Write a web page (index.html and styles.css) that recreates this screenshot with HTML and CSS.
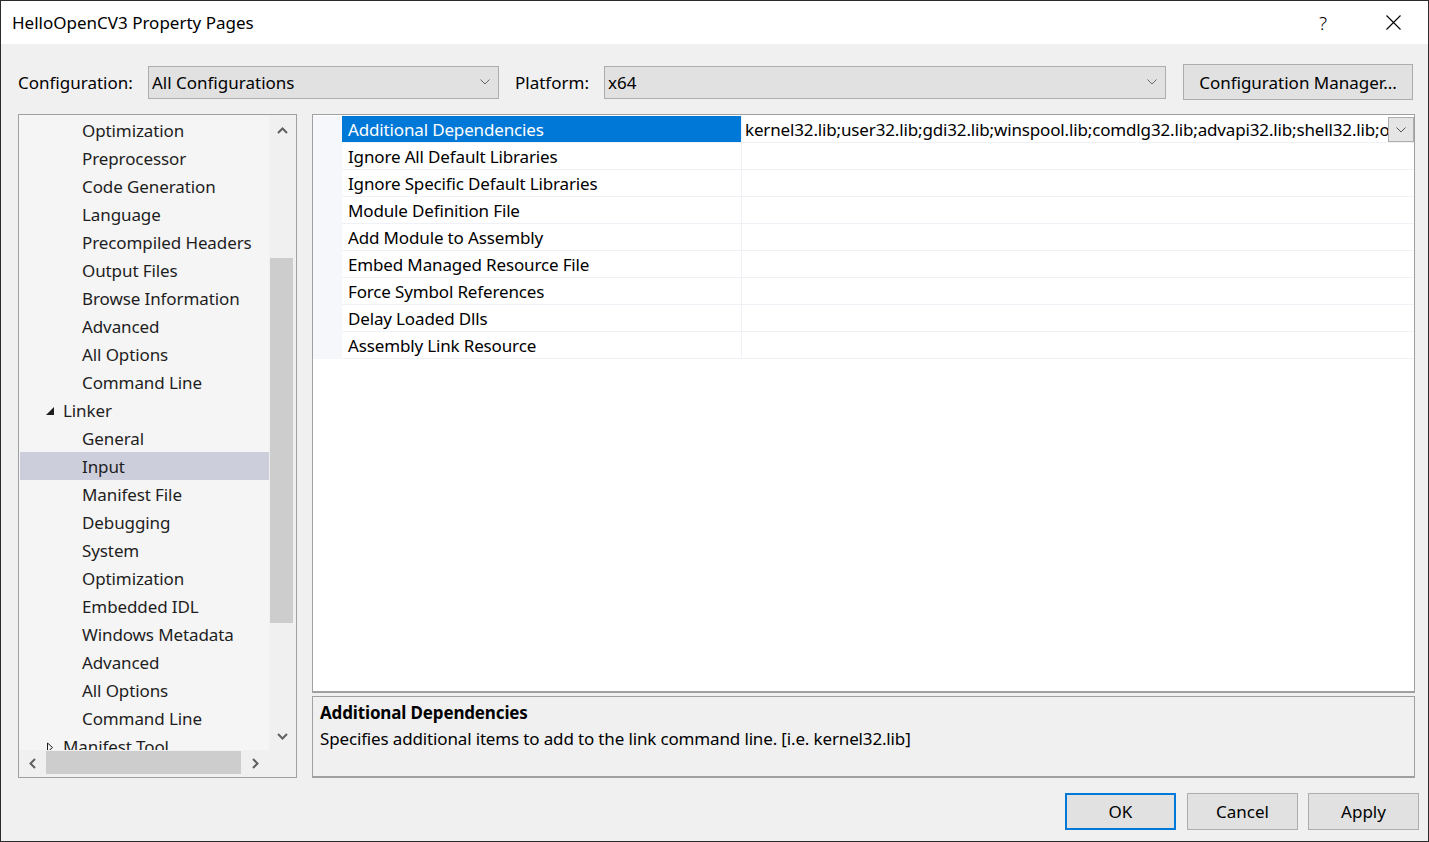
FILE: index.html
```html
<!DOCTYPE html>
<html lang="en">
<head>
	<meta charset="UTF-8" />
	<title>HelloOpenCV3 Property Pages</title>
	<link rel="stylesheet" href="styles.css">
</head>
<body>

<div class="window">

	<!-- title bar -->
	<div class="titlebar">
		<span class="title">HelloOpenCV3 Property Pages</span>
		<span class="caption-btn help">?</span>
		<span class="caption-btn">
			<svg width="15" height="15" viewBox="0 0 15 15"><path d="M0.5 0.5 L14.5 14.5 M14.5 0.5 L0.5 14.5" stroke="#000" stroke-width="1.1" fill="none"/></svg>
		</span>
	</div>

	<!-- configuration / platform -->
	<div class="config-row">
		<label class="config-label">Configuration:</label>
		<div class="combo combo-config">
			<span>All Configurations</span>
			<svg width="10" height="6" viewBox="0 0 10 6"><path d="M0.5 0.5 L5 5 L9.5 0.5" stroke="#666" fill="none"/></svg>
		</div>
		<label class="platform-label">Platform:</label>
		<div class="combo combo-platform">
			<span>x64</span>
			<svg width="10" height="6" viewBox="0 0 10 6"><path d="M0.5 0.5 L5 5 L9.5 0.5" stroke="#666" fill="none"/></svg>
		</div>
		<button class="btn btn-manager" type="button">Configuration Manager...</button>
	</div>

	<div class="main">

		<!-- page tree -->
		<div class="tree">
			<div class="tree-list">
				<div class="tree-item">Optimization</div>
				<div class="tree-item">Preprocessor</div>
				<div class="tree-item">Code Generation</div>
				<div class="tree-item">Language</div>
				<div class="tree-item">Precompiled Headers</div>
				<div class="tree-item">Output Files</div>
				<div class="tree-item">Browse Information</div>
				<div class="tree-item">Advanced</div>
				<div class="tree-item">All Options</div>
				<div class="tree-item">Command Line</div>
				<div class="tree-item tree-node">
					<svg class="expander" width="8" height="8" viewBox="0 0 8 8"><polygon points="8,0 8,8 0,8" fill="#1e1e1e"/></svg>
					<span>Linker</span>
				</div>
				<div class="tree-item">General</div>
				<div class="tree-item selected">Input</div>
				<div class="tree-item">Manifest File</div>
				<div class="tree-item">Debugging</div>
				<div class="tree-item">System</div>
				<div class="tree-item">Optimization</div>
				<div class="tree-item">Embedded IDL</div>
				<div class="tree-item">Windows Metadata</div>
				<div class="tree-item">Advanced</div>
				<div class="tree-item">All Options</div>
				<div class="tree-item">Command Line</div>
				<div class="tree-item tree-node">
					<svg class="expander" width="8" height="11" viewBox="0 0 8 11"><polygon points="1.5,1 6.5,5.5 1.5,10" fill="none" stroke="#1e1e1e"/></svg>
					<span>Manifest Tool</span>
				</div>
			</div>
			<div class="vscroll">
				<div class="sb-arrow sb-up">
					<svg width="11" height="7" viewBox="0 0 11 7"><path d="M1 6 L5.5 1.5 L10 6" stroke="#606060" stroke-width="2" fill="none"/></svg>
				</div>
				<div class="vthumb"></div>
				<div class="sb-fill"></div>
				<div class="sb-arrow sb-down">
					<svg width="11" height="7" viewBox="0 0 11 7"><path d="M1 1 L5.5 5.5 L10 1" stroke="#606060" stroke-width="2" fill="none"/></svg>
				</div>
			</div>
			<div class="hscroll">
				<div class="sb-arrow sb-left">
					<svg width="7" height="11" viewBox="0 0 7 11"><path d="M6 1 L1.5 5.5 L6 10" stroke="#606060" stroke-width="2" fill="none"/></svg>
				</div>
				<div class="hthumb"></div>
				<div class="sb-arrow sb-right">
					<svg width="7" height="11" viewBox="0 0 7 11"><path d="M1 1 L5.5 5.5 L1 10" stroke="#606060" stroke-width="2" fill="none"/></svg>
				</div>
			</div>
		</div>

		<div class="right-pane">

			<!-- property grid -->
			<div class="grid">
				<div class="prop-row">
					<div class="gutter"></div>
					<div class="prop-name active">Additional Dependencies</div>
					<div class="prop-value">
						<span class="value-text">kernel32.lib;user32.lib;gdi32.lib;winspool.lib;comdlg32.lib;advapi32.lib;shell32.lib;ole32.lib;oleaut32.lib;uuid.lib;odbc32.lib;odbccp32.lib;%(AdditionalDependencies)</span>
						<span class="dropdown">
							<svg width="10" height="6" viewBox="0 0 10 6"><path d="M0.5 0.5 L5 5 L9.5 0.5" stroke="#555" fill="none"/></svg>
						</span>
					</div>
				</div>
				<div class="prop-row"><div class="gutter"></div><div class="prop-name">Ignore All Default Libraries</div><div class="prop-value"></div></div>
				<div class="prop-row"><div class="gutter"></div><div class="prop-name">Ignore Specific Default Libraries</div><div class="prop-value"></div></div>
				<div class="prop-row"><div class="gutter"></div><div class="prop-name">Module Definition File</div><div class="prop-value"></div></div>
				<div class="prop-row"><div class="gutter"></div><div class="prop-name">Add Module to Assembly</div><div class="prop-value"></div></div>
				<div class="prop-row"><div class="gutter"></div><div class="prop-name">Embed Managed Resource File</div><div class="prop-value"></div></div>
				<div class="prop-row"><div class="gutter"></div><div class="prop-name">Force Symbol References</div><div class="prop-value"></div></div>
				<div class="prop-row"><div class="gutter"></div><div class="prop-name">Delay Loaded Dlls</div><div class="prop-value"></div></div>
				<div class="prop-row"><div class="gutter"></div><div class="prop-name">Assembly Link Resource</div><div class="prop-value"></div></div>
			</div>

			<!-- description of the selected property -->
			<div class="description">
				<div class="desc-title">Additional Dependencies</div>
				<div class="desc-text">Specifies additional items to add to the link command line. [i.e. kernel32.lib]</div>
			</div>
		</div>
	</div>

	<div class="footer">
		<button class="btn btn-ok" type="button">OK</button>
		<button class="btn" type="button">Cancel</button>
		<button class="btn" type="button">Apply</button>
	</div>
</div>

</body>
</html>
```

FILE: styles.css
```css
* {
	box-sizing: border-box;
}

body {
	margin: 0;
	font-family: "Noto Sans", "Open Sans", sans-serif;
	font-size: 17px;
	color: #1e1e1e;
	background-color: #1f1f1f;
}

.window {
	width: 1429px;
	height: 842px;
	border: 1px solid #2b2b2b;
	background-color: #f0f0f0;
	display: flex;
	flex-direction: column;
}

/* title bar */
.titlebar {
	height: 43px;
	flex: none;
	background-color: #fff;
	display: flex;
	align-items: center;
	color: #000;
}

.title {
	flex: 1;
	padding-left: 11px;
	font-size: 17px;
}

.caption-btn {
	width: 70px;
	height: 43px;
	display: flex;
	align-items: center;
	justify-content: center;
}

.help {
	font-size: 19px;
	font-weight: 300;
}

/* configuration row */
.config-row {
	display: flex;
	align-items: center;
	height: 36px;
	margin: 20px 0 0 17px;
	color: #000;
}

.config-label {
	width: 130px;
}

.platform-label {
	width: 89px;
	margin-left: 16px;
}

.combo {
	height: 33px;
	border: 1px solid #adadad;
	background-color: #e1e1e1;
	display: flex;
	align-items: center;
	justify-content: space-between;
	padding: 0 8px 0 3px;
}

.combo-config {
	width: 351px;
}

.combo-platform {
	width: 562px;
}

.btn {
	height: 36px;
	border: 1px solid #adadad;
	background-color: #e1e1e1;
	font-family: inherit;
	font-size: 17px;
	color: #000;
	padding: 0;
}

.btn-manager {
	width: 230px;
	margin-left: 17px;
}

/* tree + grid */
.main {
	display: flex;
	gap: 15px;
	height: 664px;
	margin: 14px 0 0 17px;
}

.tree {
	width: 279px;
	border: 1px solid #a0a0a0;
	background-color: #f5f5f5;
	display: grid;
	grid-template-columns: 250px 27px;
	grid-template-rows: 635px 27px;
}

.tree-list {
	overflow: hidden;
	padding-top: 1px;
	letter-spacing: -0.1px;
}

.tree-item {
	height: 28px;
	line-height: 26px;
	padding-top: 2px;
	padding-left: 63px;
	white-space: nowrap;
}

.tree-item.selected {
	background-color: #cccedb;
	margin-left: 1px;
	padding-left: 62px;
}

.tree-node {
	display: flex;
	align-items: center;
	padding-left: 27px;
}

.tree-node .expander {
	margin-right: 9px;
}

.vscroll {
	background-color: #f0f0f0;
	display: flex;
	flex-direction: column;
}

.sb-arrow {
	display: flex;
	align-items: center;
	justify-content: center;
	flex: none;
}

.sb-up {
	height: 30px;
}

.sb-down {
	height: 28px;
}

.vthumb {
	width: 23px;
	height: 365px;
	margin: 113px 0 0 1px;
	background-color: #cdcdcd;
}

.sb-fill {
	flex: 1;
}

.hscroll {
	grid-column: 1 / span 2;
	background-color: #f0f0f0;
	display: flex;
}

.sb-left {
	width: 27px;
}

.sb-right {
	width: 28px;
}

.hthumb {
	width: 195px;
	height: 23px;
	margin-top: 1px;
	background-color: #cdcdcd;
}

.right-pane {
	width: 1103px;
	display: flex;
	flex-direction: column;
	gap: 3px;
	letter-spacing: -0.15px;
}

.grid {
	height: 579px;
	border: 1px solid #a0a0a0;
	border-bottom-width: 2px;
	background-color: #fff;
	padding-top: 1px;
}

.prop-row {
	display: flex;
	height: 27px;
	color: #000;
}

.gutter {
	width: 29px;
	background-color: #f5f7fb;
}

.prop-name {
	width: 400px;
	padding-left: 6px;
	padding-top: 2px;
	line-height: 24px;
	border-right: 1px solid #eef1f6;
	border-bottom: 1px solid #eef1f6;
	white-space: nowrap;
}

.prop-name.active {
	background-color: #0078d7;
	color: #fff;
}

.prop-value {
	flex: 1;
	min-width: 0;
	display: flex;
	border-bottom: 1px solid #eef1f6;
}

.value-text {
	flex: 1;
	overflow: hidden;
	white-space: nowrap;
	padding-left: 3px;
	padding-top: 2px;
	line-height: 24px;
}

.dropdown {
	width: 26px;
	height: 25px;
	margin-top: 1px;
	border: 1px solid #adadad;
	background-color: #e5e5e5;
	display: flex;
	align-items: center;
	justify-content: center;
}

.description {
	height: 82px;
	border: 1px solid #a0a0a0;
	border-bottom-width: 2px;
	padding: 3px 7px;
	color: #000;
	line-height: 26px;
}

.desc-title {
	font-weight: bold;
}

/* OK / Cancel / Apply */
.footer {
	display: flex;
	justify-content: flex-end;
	gap: 11px;
	margin-top: 15px;
	padding-right: 9px;
}

.footer .btn {
	width: 111px;
	height: 37px;
}

.footer .btn + .btn + .btn {
	margin-left: -1px;
}

.btn-ok {
	border: 2px solid #0078d7;
}
```
